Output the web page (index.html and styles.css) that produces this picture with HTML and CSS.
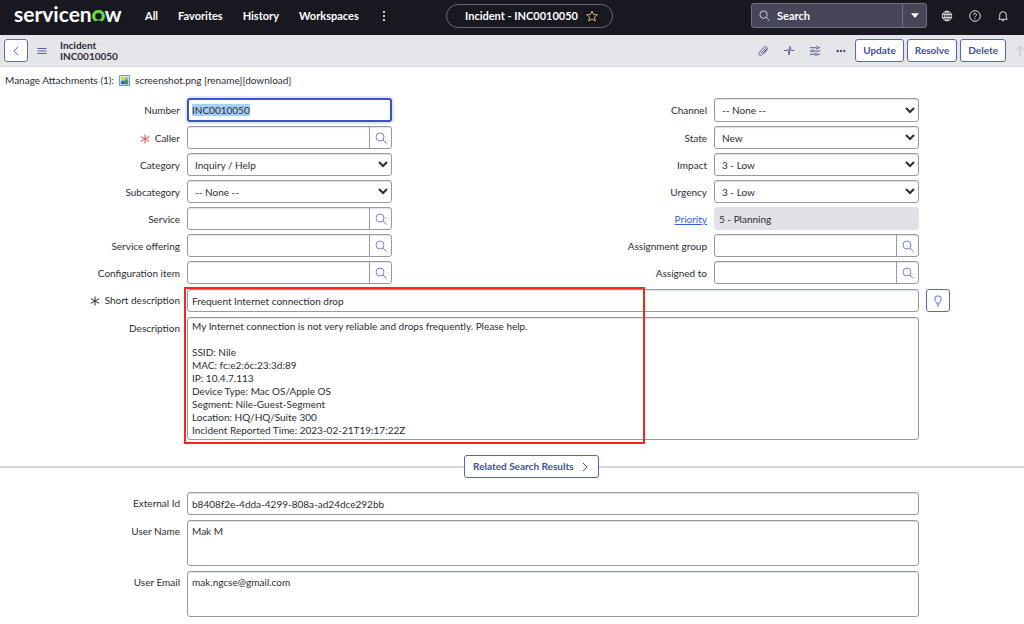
FILE: index.html
```html
<!DOCTYPE html>
<html lang="en">
<head>
<meta charset="utf-8">
<meta name="viewport" content="width=device-width, initial-scale=1">
<title>Incident - INC0010050</title>
<link rel="stylesheet" href="styles.css">
</head>
<body>
<svg class="sprite" aria-hidden="true">
  <symbol id="lens" viewBox="0 0 12 12"><circle cx="5" cy="5" r="4"/><path d="M7.900 7.900 11.500 11.500"/></symbol>
  <symbol id="star" viewBox="0 0 12 12"><path d="M6 1 7.500 4.500 11.300 4.800 8.400 7.200 9.300 11 6 9 2.700 11 3.600 7.200.700 4.800 4.500 4.500Z"/></symbol>
  <symbol id="required" viewBox="0 0 10 10"><path d="M5 .500v9M.800 2.600l8.400 4.800M.800 7.400l8.400-4.800"/></symbol>
</svg>

<header class="topbar">
  <div class="brand" aria-label="servicenow"><span>servicen</span><svg class="brand-o" viewBox="0 0 13 12" aria-hidden="true"><path d="M6.500 0A6.200 6.200 0 0 0 2.300 10.900c.6.500 1.300.5 1.900.1a4 4 0 0 1 4.600 0c.6.4 1.300.4 1.900-.1A6.200 6.200 0 0 0 6.500 0ZM6.500 9.400A3.200 3.200 0 1 1 6.500 3A3.200 3.200 0 0 1 6.500 9.400Z" fill-rule="evenodd"/></svg><span>w</span></div>
  <nav class="menu">
    <button type="button">All</button>
    <button type="button">Favorites</button>
    <button type="button">History</button>
    <button type="button">Workspaces</button>
    <button type="button" aria-label="More"><svg class="dots" viewBox="0 0 4 12"><circle cx="2" cy="2" r="1.100"/><circle cx="2" cy="6" r="1.100"/><circle cx="2" cy="10" r="1.100"/></svg></button>
  </nav>
  <button type="button" class="crumb"><span>Incident - INC0010050</span><svg class="star"><use href="#star"/></svg></button>
  <div class="tools">
    <form class="search">
      <svg class="search-lens"><use href="#lens"/></svg>
      <input type="search" placeholder="Search" aria-label="Search">
      <button type="button" aria-label="Search scope"><svg viewBox="0 0 8 5" class="caret"><path d="M0 .3h8L4 5Z"/></svg></button>
    </form>
    <button type="button" class="tool" aria-label="Language"><svg viewBox="0 0 12 12"><circle cx="6" cy="6" r="4.800"/><ellipse cx="6" cy="6" rx="2.200" ry="4.800"/><path d="M6 1.200v9.600M1.500 4.400h9M1.500 7.600h9"/></svg></button>
    <button type="button" class="tool" aria-label="Help"><svg viewBox="0 0 12 12"><circle cx="6" cy="6" r="5.300"/><path d="M4.500 4.800c0-2 3-2 3 0C7.500 6 6 5.900 6 7.200M6 8.200v1"/></svg></button>
    <button type="button" class="tool" aria-label="Notifications"><svg viewBox="0 0 12 12"><path d="M1.800 9.300h8.400L9.300 7.800V5a3.300 3.300 0 0 0-6.600 0v2.800ZM4.800 10.700h2.400"/></svg></button>
  </div>
</header>

<div class="formbar">
  <button type="button" class="back" aria-label="Back"><svg viewBox="0 0 12 12"><path d="M8 2 3.800 6 8 10"/></svg></button>
  <button type="button" class="icon burger" aria-label="Form menu"><svg viewBox="0 0 12 12"><path d="M1.500 3.500h9M1.500 6h9M1.500 8.500h9"/></svg></button>
  <h1 class="title">Incident<br>INC0010050</h1>
  <div class="actions">
    <button type="button" class="icon" aria-label="Attachments"><svg viewBox="0 0 12 12"><path d="M4 8.400 8 3.900c.8-.8 1.900.1 1.200.9L4.700 9.900c-1.500 1.500-3.900-.2-2.500-2L6.700 2.500C8.600.5 11.700 2.700 9.900 5L6.600 8.900"/></svg></button>
    <button type="button" class="icon" aria-label="Activity"><svg viewBox="0 0 12 12"><path d="M.8 5.500h2.900l1.100-1.500L6.200 10 7 1.500l1.200 4h3"/></svg></button>
    <button type="button" class="icon" aria-label="Personalize form"><svg viewBox="0 0 12 12"><path d="M.8 2.700h6M9.400 2.700h1.800M.8 6h1.600M5 6h6.200M.8 9.300h5M8.400 9.300h2.800"/><circle cx="8.100" cy="2.700" r="1.200"/><circle cx="3.700" cy="6" r="1.200"/><circle cx="7.100" cy="9.300" r="1.200"/></svg></button>
    <button type="button" class="icon more" aria-label="More options"><svg viewBox="0 0 12 12"><circle cx="2.700" cy="6" r="1.200"/><circle cx="6" cy="6" r="1.200"/><circle cx="9.300" cy="6" r="1.200"/></svg></button>
    <div class="buttons">
      <button type="button" class="btn">Update</button>
      <button type="button" class="btn">Resolve</button>
      <button type="button" class="btn">Delete</button>
    </div>
    <button type="button" class="icon up" aria-label="Previous record"><svg viewBox="0 0 12 12"><path d="M6 11V1.500M2 5.500l4-4 4 4"/></svg></button>
  </div>
</div>

<div class="attachments">
  <span>Manage Attachments (1):</span>
  <svg class="file" viewBox="0 0 12 12" aria-hidden="true"><path class="page" d="M.5.500h11v11H.5Z"/><path class="sky" d="M2 2h8v8H2Z"/><path class="sun" d="M2 2h6L5 6 2 6Z"/><path class="hill" d="m2 7 3-1 5 4H2Z"/><path class="fold" d="m6 7 2-3 2 2v4H8Z"/></svg>
  <span>screenshot.png [rename][download]</span>
</div>

<main class="record">
  <div class="columns">
    <div class="column">
      <div class="field first"><label for="number">Number</label><input id="number" class="control active" type="text" value="INC0010050"></div>
      <div class="field"><label for="caller"><svg class="mark red"><use href="#required"/></svg>Caller</label><div class="lookup"><input id="caller" type="text"><button type="button" aria-label="Look up caller"><svg><use href="#lens"/></svg></button></div></div>
      <div class="field"><label for="category">Category</label><select id="category" class="control"><option>Inquiry / Help</option></select></div>
      <div class="field"><label for="subcategory">Subcategory</label><select id="subcategory" class="control"><option>-- None --</option></select></div>
      <div class="field"><label for="service">Service</label><div class="lookup"><input id="service" type="text"><button type="button" aria-label="Look up service"><svg><use href="#lens"/></svg></button></div></div>
      <div class="field"><label for="offering">Service offering</label><div class="lookup"><input id="offering" type="text"><button type="button" aria-label="Look up service offering"><svg><use href="#lens"/></svg></button></div></div>
      <div class="field"><label for="ci">Configuration item</label><div class="lookup"><input id="ci" type="text"><button type="button" aria-label="Look up configuration item"><svg><use href="#lens"/></svg></button></div></div>
    </div>
    <div class="column">
      <div class="field first"><label for="channel">Channel</label><select id="channel" class="control"><option>-- None --</option></select></div>
      <div class="field"><label for="state">State</label><select id="state" class="control"><option>New</option></select></div>
      <div class="field"><label for="impact">Impact</label><select id="impact" class="control"><option>3 - Low</option></select></div>
      <div class="field"><label for="urgency">Urgency</label><select id="urgency" class="control"><option>3 - Low</option></select></div>
      <div class="field"><label for="priority"><a href="#priority">Priority</a></label><input id="priority" class="control readonly" type="text" value="5 - Planning" readonly></div>
      <div class="field"><label for="group">Assignment group</label><div class="lookup"><input id="group" type="text"><button type="button" aria-label="Look up assignment group"><svg><use href="#lens"/></svg></button></div></div>
      <div class="field"><label for="assigned">Assigned to</label><div class="lookup"><input id="assigned" type="text"><button type="button" aria-label="Look up assigned to"><svg><use href="#lens"/></svg></button></div></div>
    </div>
  </div>

  <div class="wide highlighted">
    <div class="field"><label for="short"><svg class="mark"><use href="#required"/></svg>Short description</label><input id="short" class="control" type="text" value="Frequent Internet connection drop"><button type="button" class="bulb" aria-label="Suggestions"><svg viewBox="0 0 12 12"><path d="M4.500 8.200C4.500 6.800 2.800 6.200 2.800 4a3.200 3.200 0 0 1 6.400 0C9.200 6.200 7.500 6.800 7.500 8.200ZM4.800 9.800h2.400M5.300 11.200h1.400"/></svg></button></div>
    <div class="field"><label for="description">Description</label><textarea id="description" class="control long" rows="9">My Internet connection is not very reliable and drops frequently. Please help.

SSID: Nile
MAC: fc:e2:6c:23:3d:89
IP: 10.4.7.113
Device Type: Mac OS/Apple OS
Segment: Nile-Guest-Segment
Location: HQ/HQ/Suite 300
Incident Reported Time: 2023-02-21T19:17:22Z</textarea></div>
    <div class="callout"></div>
  </div>

  <div class="divider"><button type="button" class="btn related">Related Search Results<svg viewBox="0 0 8 12"><path d="M2 2 6 6 2 10"/></svg></button></div>

  <div class="wide">
    <div class="field"><label for="external">External Id</label><input id="external" class="control" type="text" value="b8408f2e-4dda-4299-808a-ad24dce292bb"></div>
    <div class="field"><label for="user">User Name</label><textarea id="user" class="control" rows="3">Mak M</textarea></div>
    <div class="field"><label for="email">User Email</label><textarea id="email" class="control" rows="3">mak.ngcse@gmail.com</textarea></div>
  </div>
</main>
<script src="main.js"></script>
</body>
</html>
```
FILE: styles.css
```css
* { box-sizing: border-box; }

body {
  margin: 0;
  overflow-x: hidden;
  background: #fff;
  color: #2b2d31;
  font: 10px/13px Lato, "Open Sans", sans-serif;
}

button, input, select, textarea { margin: 0; font: inherit; color: inherit; }
button { padding: 0; border: 0; background: none; }
svg { flex: none; fill: none; stroke: currentColor; }
.sprite { position: absolute; width: 0; height: 0; }

/* Top navigation */
.topbar {
  display: grid;
  grid-template-columns: 12fr auto 11fr;
  align-items: center;
  grid-template-areas: "left crumb right";
  height: 35px;
  padding: 0 15px 4px 14px;
  background: #181821;
  color: #fff;
  font-size: 11px;
  font-weight: 700;
}
.brand {
  grid-area: left;
  display: flex;
  align-items: baseline;
  padding-bottom: 3px;
  font-size: 21px;
  line-height: 24px;
  font-weight: 700;
}
.brand-o { width: 13px; height: 12px; fill: #62d84e; stroke: none; }
.menu {
  grid-area: left;
  display: flex;
  align-items: center;
  gap: 20px;
  margin-left: 131px;
}
.dots { display: block; width: 4px; height: 12px; margin-left: 3px; fill: #fff; stroke: none; }
.crumb {
  grid-area: crumb;
  display: flex;
  align-items: center;
  gap: 8px;
  height: 24px;
  padding: 0 14px 0 18px;
  border: 1px solid #696976;
  border-radius: 12px;
}
.star { width: 12px; height: 12px; color: #d9b26a; }
.tools {
  grid-area: right;
  display: flex;
  align-items: center;
  justify-content: flex-end;
  gap: 16px;
}
.search {
  display: flex;
  align-items: center;
  width: 176px;
  height: 25px;
  margin-right: -2px;
  border: 1px solid #71717f;
  border-radius: 3px;
  background: #464659;
}
.search-lens { width: 11px; height: 11px; margin: 0 7px; color: #d5d5dc; }
.search input {
  flex: 1;
  min-width: 0;
  padding: 0;
  border: 0;
  background: none;
}
.search input::placeholder { color: #fff; opacity: 1; }
.search button {
  display: grid;
  place-items: center;
  align-self: stretch;
  width: 24px;
  border-left: 1px solid #71717f;
}
.caret { width: 8px; height: 5px; fill: #fff; stroke: none; }
.tool svg { display: block; width: 12px; height: 12px; color: #dcdce2; }

/* Form header */
.formbar {
  display: flex;
  align-items: center;
  height: 32px;
  padding-left: 4px;
  border-bottom: 1px solid #dcdde1;
  background: #e5e6ea;
}
.back {
  display: grid;
  place-items: center;
  width: 24px;
  height: 23px;
  border: 1px solid #5e6bc4;
  border-radius: 3px;
  background: #fff;
  color: #5c69c0;
}
.back svg, .icon svg { display: block; width: 12px; height: 12px; }
.icon { color: #5a6094; }
.burger { margin: 0 12px 0 8px; }
.title { margin: 0; font-size: 10px; line-height: 11px; font-weight: 700; }
.actions { display: flex; align-items: center; gap: 14px; margin-left: auto; margin-right: -2px; }
.more svg { fill: #454c85; stroke: none; }
.buttons { display: flex; gap: 3px; margin: 0 -6px; }
.btn {
  height: 23px;
  padding: 0 7px;
  border: 1px solid #5865c0;
  border-radius: 3px;
  background: #fff;
  color: #3f4bae;
  font-weight: 700;
}
.up { color: #b9bbc4; }

/* Attachments */
.attachments { display: flex; align-items: center; gap: 5px; height: 27px; padding-left: 5px; }
.file { width: 11px; height: 11px; stroke: none; }
.page { fill: #e7f0fb; stroke: #5c8ed0; }
.sky { fill: #8fbdf0; }
.hill { fill: #2f6fb4; }
.sun { fill: #f1d34c; }
.fold { fill: #3d9a5b; }

/* Record form */
.record { padding-top: 4px; }
.columns { display: flex; gap: 135px; padding-right: 105px; }
.column { flex: 1; min-width: 0; display: grid; gap: 4px; }
.field {
  display: grid;
  grid-template-columns: 180px 1fr;
  column-gap: 7px;
  min-width: 0;
}
.field label { padding-top: 6px; text-align: right; }
.field a { color: #2f5fd8; text-decoration: underline; }
.control, .lookup {
  width: 100%;
  min-width: 0;
  height: 23px;
  border: 1px solid #959ba6;
  border-radius: 3px;
  background: #fff;
  box-shadow: inset 0 1px 1px #dfe1e5;
}
.first .control { height: 24px; }
input.control { padding: 0 4px; }
select.control { padding: 0 3px; }
.active { border: 2px solid #3c52c4; outline: 0; box-shadow: 0 0 0 2px #e4e7f7; }
input.active { padding: 0 3px; }
.active::selection { background: #a5cdf5; color: #2b2d31; }
.readonly { border-color: #e1e2e7; background: #e1e2e7; box-shadow: none; }
.lookup { display: flex; }
.lookup input { flex: 1; min-width: 0; padding: 0 4px; border: 0; background: none; }
.lookup button {
  display: grid;
  place-items: center;
  width: 22px;
  border-left: 1px solid #959ba6;
  color: #7a86d2;
}
.lookup svg { width: 12px; height: 12px; }
.mark { width: 10px; height: 10px; margin-right: 5px; vertical-align: -2px; }
.red { color: #e0455e; }

.wide { display: grid; gap: 5px; }
.wide .field { grid-template-columns: 180px 1fr 98px; }
.wide label { padding-top: 5px; }
.highlighted { position: relative; margin-top: 5px; }
textarea.control { display: block; height: auto; padding: 4px 4px 1px; resize: none; overflow: hidden; }
textarea.long { padding: 2px 4px; }
.bulb {
  display: grid;
  place-items: center;
  width: 24px;
  height: 23px;
  border: 1px solid #5865c0;
  border-radius: 3px;
  color: #6672c8;
}
.bulb svg { width: 12px; height: 12px; }
.callout {
  position: absolute;
  top: -2px;
  left: 184px;
  width: 45%;
  bottom: -4px;
  border: 2px solid #f0281e;
  pointer-events: none;
}

.divider { display: flex; align-items: center; margin: 15px 0 14px; }
.divider::before, .divider::after { content: ""; flex: 12; height: 2px; background: #d3d7dc; }
.divider::after { flex: 11; }
.related { display: flex; align-items: center; gap: 7px; padding: 0 9px 0 8px; }
.related svg { width: 8px; height: 12px; }
```
FILE: main.js
```js
// Opens the record with its number selected for editing.
const number = document.getElementById('number');
number.focus();
number.select();
```
